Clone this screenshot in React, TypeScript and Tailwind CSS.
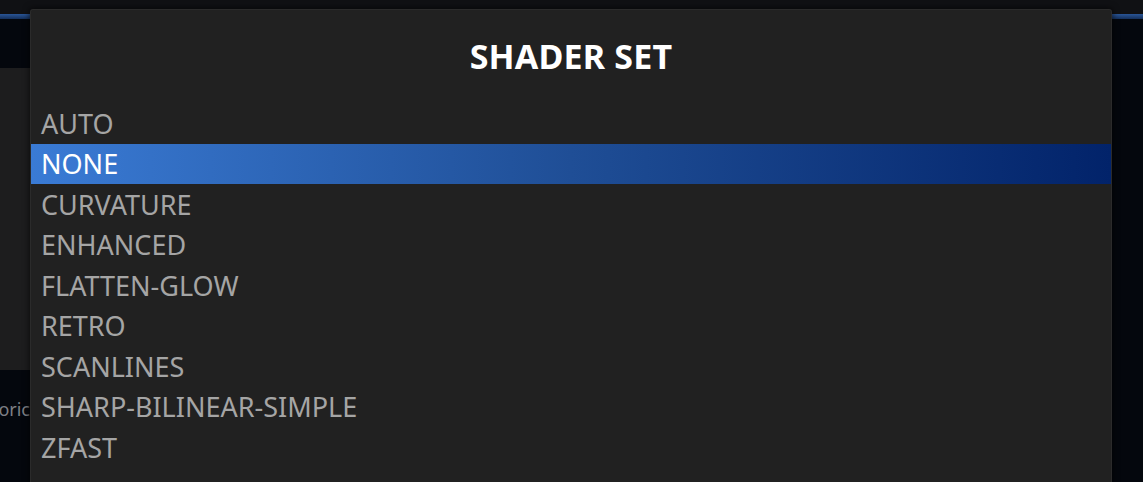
import React from "react";

const items = [
  "AUTO",
  "NONE",
  "CURVATURE",
  "ENHANCED",
  "FLATTEN-GLOW",
  "RETRO",
  "SCANLINES",
  "SHARP-BILINEAR-SIMPLE",
  "ZFAST",
];

export default function App() {
  return (
    <div
      className="relative w-[1143px] h-[482px] overflow-hidden bg-[#04070d]"
      style={{ fontFamily: '"Noto Sans", "Open Sans", sans-serif' }}
    >
      {/* background screen */}
      <div className="flex flex-col h-full">
        <div className="h-[14px] bg-[#101114]" />
        <div className="h-[5px] bg-[linear-gradient(to_bottom,#2a5596,#14305c)]" />
        <div className="h-[49px] bg-[#04070d]" />
        <div className="flex h-[302px]">
          <div className="w-[560px] bg-[#1d1d1e]" />
          <div className="flex-1 bg-[#04070d]" />
        </div>
        <div className="flex flex-1">
          <div className="w-[30px] overflow-hidden flex justify-end pt-[26px]">
            <span className="whitespace-nowrap text-[18px] text-[#7d7f84]">Historic</span>
          </div>
        </div>
      </div>

      {/* dialog */}
      <div className="absolute left-[31px] top-[10px] w-[1080px] h-[520px] bg-[#212121] rounded-[2px] ring-1 ring-[#2b2b2b] shadow-[0_0_6px_2px_rgba(0,0,0,0.6)] flex flex-col">
        <div className="h-[93px] flex items-center justify-center">
          <span className="text-[34px] font-bold text-white tracking-[0.2px]">SHADER SET</span>
        </div>
        <div className="flex flex-col">
          {items.map((it) => {
            const sel = it === "NONE";
            return (
              <div
                key={it}
                className={
                  sel
                    ? "h-[40.5px] flex items-center px-[10px] bg-[linear-gradient(to_right,#3a7bd5,#1f4e96_50%,#02236a)] text-white"
                    : "h-[40.5px] flex items-center px-[10px] text-[#a5a5a5]"
                }
              >
                <span className="text-[27px] leading-none">{it}</span>
              </div>
            );
          })}
        </div>
      </div>
    </div>
  );
}
